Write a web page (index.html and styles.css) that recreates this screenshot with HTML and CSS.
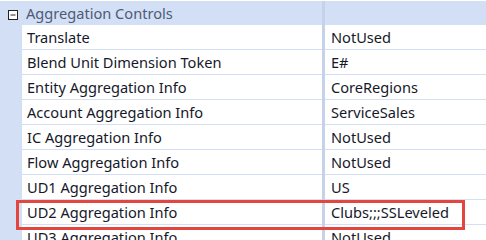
FILE: index.html
```html
<!DOCTYPE html>
<html>
<head>
<meta charset="utf-8">
<link rel="stylesheet" href="styles.css">
</head>
<body>
<div class="grid">
  <div class="header">
    <div class="toggle"><svg width="11" height="11" viewBox="0 0 11 11"><rect x="0.5" y="0.5" width="9" height="9" fill="#fff" stroke="#222" stroke-width="1"/><line x1="2.5" y1="5" x2="7.5" y2="5" stroke="#222" stroke-width="1"/></svg></div>
    <div class="htitle">Aggregation Controls</div>
    <div class="divider"></div>
    <div class="hval"></div>
  </div>
  <div class="body">
    <div class="gutter"></div>
    <div class="rows">
      <div class="row"><div class="label">Translate</div><div class="divider"></div><div class="value">NotUsed</div></div>
      <div class="row"><div class="label">Blend Unit Dimension Token</div><div class="divider"></div><div class="value">E#</div></div>
      <div class="row"><div class="label">Entity Aggregation Info</div><div class="divider"></div><div class="value">CoreRegions</div></div>
      <div class="row"><div class="label">Account Aggregation Info</div><div class="divider"></div><div class="value">ServiceSales</div></div>
      <div class="row"><div class="label">IC Aggregation Info</div><div class="divider"></div><div class="value">NotUsed</div></div>
      <div class="row"><div class="label">Flow Aggregation Info</div><div class="divider"></div><div class="value">NotUsed</div></div>
      <div class="row"><div class="label">UD1 Aggregation Info</div><div class="divider"></div><div class="value">US</div></div>
      <div class="row"><div class="label">UD2 Aggregation Info</div><div class="divider"></div><div class="value">Clubs;;;SSLeveled</div></div>
      <div class="row"><div class="label">UD3 Aggregation Info</div><div class="divider"></div><div class="value">NotUsed</div></div>
    </div>
  </div>
  <div class="highlight"></div>
</div>
</body>
</html>
```
FILE: styles.css
```css
html, body {
  margin: 0;
  padding: 0;
  background: #fff;
}
body {
  font-family: "Noto Sans", "Open Sans", sans-serif;
  font-size: 14.6px;
  color: #16182a;
  overflow: hidden;
  width: 486px;
  height: 240px;
}
.grid {
  position: relative;
  width: 486px;
  border-top: 1px solid #fff;
}
.header {
  display: grid;
  grid-template-columns: 22px 300px 3px 1fr;
  height: 24px;
  background: #d3dff5;
}
.toggle {
  display: flex;
  align-items: flex-start;
  padding: 9px 0 0 8px;
}
.toggle svg { display: block; }
.htitle {
  padding-left: 4px;
  line-height: 24px;
  font-size: 14.6px;
  color: #4d5a78;
  white-space: nowrap;
}
.divider {
  background: #c5d2ea;
}
.body {
  display: flex;
}
.gutter {
  width: 22px;
  background: #d3dff5;
}
.rows {
  flex: 1;
}
.row {
  display: grid;
  grid-template-columns: 300px 3px 1fr;
  height: 25px;
}
.label, .value {
  box-sizing: border-box;
  border-bottom: 1px solid #d3dff5;
  line-height: 24px;
  white-space: nowrap;
}
.label { padding-left: 5px; }
.value { padding-left: 6px; }
.highlight {
  position: absolute;
  left: 16px;
  top: 199px;
  width: 449px;
  height: 30px;
  box-sizing: border-box;
  border: 3px solid #e2463f;
}
```
